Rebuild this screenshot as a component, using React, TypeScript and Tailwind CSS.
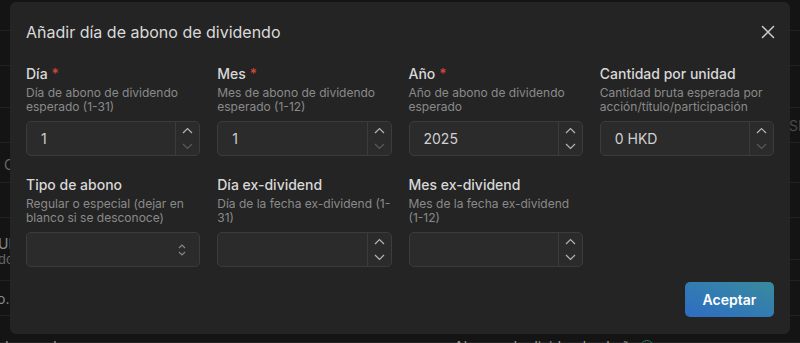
import React from "react";

const Up = ({ dim }: { dim?: boolean }) => (
  <svg width="11" height="7" viewBox="0 0 11 7" fill="none">
    <path d="M1 6 L5.5 1.5 L10 6" stroke={dim ? "#5a5a5a" : "#b5b5b5"} strokeWidth="1.2" />
  </svg>
);
const Down = ({ dim }: { dim?: boolean }) => (
  <svg width="11" height="7" viewBox="0 0 11 7" fill="none">
    <path d="M1 1 L5.5 5.5 L10 1" stroke={dim ? "#5a5a5a" : "#b5b5b5"} strokeWidth="1.2" />
  </svg>
);

function NumberInput({ value, upDim, downDim }: { value?: string; upDim?: boolean; downDim?: boolean }) {
  return (
    <div className="flex h-[35px] rounded-[5px] border border-[#3c3c3c] bg-[#2b2b2b]">
      <div className="flex flex-1 items-center pl-[14px] text-[14px] text-[#d0d0d0]">{value}</div>
      <div className="flex w-[24px] flex-col border-l border-[#3c3c3c]">
        <div className="flex flex-1 items-center justify-center pt-[1px]"><Up dim={upDim} /></div>
        <div className="flex flex-1 items-center justify-center pb-[1px]"><Down dim={downDim} /></div>
      </div>
    </div>
  );
}

function SelectInput() {
  return (
    <div className="flex h-[35px] items-center justify-end rounded-[5px] border border-[#3c3c3c] bg-[#2b2b2b] pr-[12px]">
      <svg width="10" height="14" viewBox="0 0 10 14" fill="none">
        <path d="M2 5 L5 2 L8 5" stroke="#8a8a8a" strokeWidth="1.1" />
        <path d="M2 9 L5 12 L8 9" stroke="#8a8a8a" strokeWidth="1.1" />
      </svg>
    </div>
  );
}

function Field({ label, req, desc, children }: { label: string; req?: boolean; desc: string; children: React.ReactNode }) {
  return (
    <div className="flex flex-col">
      <div className="h-[20px] text-[14px] font-medium leading-[20px] text-[#d8d8d8]">
        {label}
        {req && <span className="ml-[4px] text-[#d0453a]">*</span>}
      </div>
      <div className="mt-[2px] h-[28px] text-[12px] leading-[14px] text-[#8a8a8a]">{desc}</div>
      <div className="mt-[7px]">{children}</div>
    </div>
  );
}

export default function App() {
  const rows = [31, 35, 42, 35, 40, 35, 42, 21, 35, 27];
  return (
    <div className="relative h-[343px] w-[800px] overflow-hidden bg-[#141414]" style={{ fontFamily: "Inter, 'Noto Sans', sans-serif" }}>
      <div className="flex flex-col">
        {rows.map((h, i) => (
          <div key={i} className="relative border-b border-[#222222]" style={{ height: h }}>
            {i === 4 && <span className="absolute left-[4px] top-[11px] text-[14px] text-[#6a6a6a]">C</span>}
            {i === 3 && <span className="absolute left-[789px] top-[7px] text-[14px] text-[#4a4a4a]">SE</span>}
            {i === 6 && (
              <>
                <span className="absolute left-[-2px] top-[19px] text-[14px] leading-[14px] text-[#8a8a8a]">UR</span>
                <span className="absolute left-[-2px] top-[35px] text-[13px] leading-[13px] text-[#666]">do</span>
              </>
            )}
            {i === 8 && <span className="absolute left-[-3px] top-[7px] text-[14px] text-[#8a8a8a]">o.</span>}
          </div>
        ))}
      </div>
      <div className="absolute left-0 top-[336px] text-[14px] text-[#9a9a9a]">do anual</div>
      <div className="absolute left-[454px] top-[336px] flex items-center gap-[2px] text-[14px] text-[#9a9a9a]">
        Abonos de dividendo al año
        <span className="inline-block h-[14px] w-[14px] rounded-full border border-[#2f7a5a]"></span>
      </div>

      <div className="absolute left-[10px] top-[2px] h-[332px] w-[780px] rounded-[6px] bg-[#242424] px-[16px] pt-[18px] pb-[16px]">
        <div className="flex h-[24px] items-center justify-between">
          <div className="text-[16px] leading-[24px] text-[#dadada]">Añadir día de abono de dividendo</div>
          <svg width="14" height="14" viewBox="0 0 14 14" fill="none" className="mr-[-1px]">
            <path d="M1.5 1.5 L12.5 12.5 M12.5 1.5 L1.5 12.5" stroke="#cfcfcf" strokeWidth="1.5" strokeLinecap="round" />
          </svg>
        </div>
        <div className="mt-[20px] grid grid-cols-4 gap-x-[17px] gap-y-[19px]">
          <Field label="Día" req desc="Día de abono de dividendo esperado (1-31)">
            <NumberInput value="1" downDim />
          </Field>
          <Field label="Mes" req desc="Mes de abono de dividendo esperado (1-12)">
            <NumberInput value="1" downDim />
          </Field>
          <Field label="Año" req desc="Año de abono de dividendo esperado">
            <NumberInput value="2025" />
          </Field>
          <Field label="Cantidad por unidad" desc="Cantidad bruta esperada por acción/título/participación">
            <NumberInput value="0 HKD" downDim />
          </Field>
          <Field label="Tipo de abono" desc="Regular o especial (dejar en blanco si se desconoce)">
            <SelectInput />
          </Field>
          <Field label="Día ex-dividend" desc="Día de la fecha ex-dividend (1-31)">
            <NumberInput />
          </Field>
          <Field label="Mes ex-dividend" desc="Mes de la fecha ex-dividend (1-12)">
            <NumberInput />
          </Field>
        </div>
        <div className="mt-[15px] flex justify-end">
          <button className="h-[35px] w-[89px] rounded-[5px] bg-gradient-to-tr from-[#2f6cc4] to-[#3a8a9d] text-[14px] font-semibold text-white">
            Aceptar
          </button>
        </div>
      </div>
    </div>
  );
}
